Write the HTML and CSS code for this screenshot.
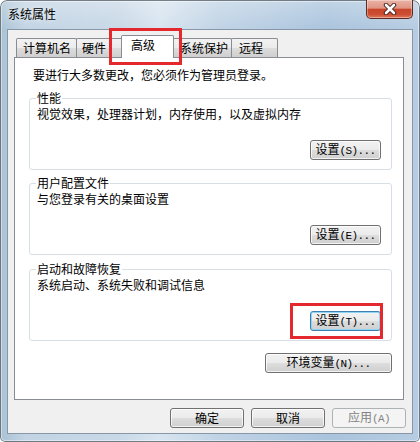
FILE: index.html
```html
<!DOCTYPE html>
<html lang="zh-CN">
<head>
<meta charset="utf-8">
<title>系统属性</title>
<link rel="stylesheet" href="styles.css">
</head>
<body>
<div class="window">
  <div class="titlebar">
    <span class="title">系统属性</span>
    <div class="close">
      <svg width="14" height="12" viewBox="0 0 14 12">
        <path d="M3 2 L11 10 M11 2 L3 10" stroke="#3a1a14" stroke-width="4.4" stroke-linecap="round" fill="none"/>
        <path d="M3 2 L11 10 M11 2 L3 10" stroke="#ffffff" stroke-width="2.6" stroke-linecap="round" fill="none"/>
      </svg>
    </div>
  </div>
  <div class="client">
    <div class="tabs">
      <div class="tab t1">计算机名</div>
      <div class="tab t2">硬件</div>
      <div class="tab t3 sel">高级</div>
      <div class="tab t4">系统保护</div>
      <div class="tab t5">远程</div>
    </div>
    <div class="panel">
      <p class="intro">要进行大多数更改，您必须作为管理员登录。</p>
      <div class="group g1">
        <div class="legend">性能</div>
        <p class="desc">视觉效果，处理器计划，内存使用，以及虚拟内存</p>
        <div class="row"><button class="btn small">设置<span class="lat">(S)...</span></button></div>
      </div>
      <div class="group g2">
        <div class="legend">用户配置文件</div>
        <p class="desc">与您登录有关的桌面设置</p>
        <div class="row"><button class="btn small">设置<span class="lat">(E)...</span></button></div>
      </div>
      <div class="group g3">
        <div class="legend">启动和故障恢复</div>
        <p class="desc">系统启动、系统失败和调试信息</p>
        <div class="row"><button class="btn small focus">设置<span class="lat">(T)...</span></button></div>
      </div>
      <div class="row env-row"><button class="btn env">环境变量<span class="lat">(N)...</span></button></div>
    </div>
    <div class="footer">
      <button class="btn big">确定</button>
      <button class="btn big">取消</button>
      <button class="btn big disabled">应用<span class="lat">(A)</span></button>
    </div>
  </div>
  <div class="mark mark-tab"></div>
  <div class="mark mark-btn"></div>
</div>
</body>
</html>
```
FILE: styles.css
```css
* { box-sizing: border-box; }
html, body { margin: 0; padding: 0; }
body {
  width: 420px;
  height: 442px;
  overflow: hidden;
  background: #ffffff;
  font: 12px/14px "Noto Sans CJK SC", sans-serif;
  color: #000;
}
p { margin: 0; }

.window {
  position: relative;
  width: 420px;
  height: 442px;
  border-radius: 7px 7px 5px 5px;
  overflow: hidden;
  background:
    linear-gradient(180deg, rgba(255,255,255,0.28), rgba(255,255,255,0) 30px),
    linear-gradient(90deg, #a9c2d4 0, #c2d4e4 6%, #c8d8e7 28%, #d8e5f0 38%, #c0d3e5 52%, #aac4dd 78%, #b6cce2 100%);
  box-shadow: inset 0 0 0 1px rgba(40,50,60,0.6), inset 0 0 0 2px rgba(255,255,255,0.45);
}

.titlebar {
  height: 29px;
  display: flex;
  align-items: flex-start;
  padding-left: 8px;
}
.title {
  margin-top: 7px;
  text-shadow: 0 0 5px rgba(255,255,255,0.9);
}
.close {
  margin-left: auto;
  margin-right: 7px;
  width: 47px;
  height: 19px;
  border: 1px solid #5e2a22;
  border-top: none;
  border-radius: 0 0 5px 5px;
  background: linear-gradient(180deg, #eab3a7 0%, #df9584 45%, #c9452c 52%, #cc4e33 80%, #e07a5e 100%);
  box-shadow: inset 0 0 0 1px rgba(255,255,255,0.35);
  display: flex;
  align-items: center;
  justify-content: center;
}

.client {
  margin: 0 7px;
  height: 405px;
  background: #f0f0f0;
  border: 1px solid #8797a8;
  padding-top: 5px;
  display: flex;
  flex-direction: column;
}

.tabs {
  display: flex;
  align-items: flex-end;
  height: 22px;
  padding-left: 8px;
  position: relative;
  z-index: 1;
}
.tab {
  height: 19px;
  border: 1px solid #898c95;
  border-bottom: none;
  padding: 2px 0 0 6px;
  margin-left: -1px;
  white-space: nowrap;
  background: linear-gradient(180deg, #f2f2f2 0%, #ebebeb 50%, #dddddd 51%, #cfcfcf 100%);
  border-radius: 2px 2px 0 0;
}
.t1 { width: 61px; margin-left: 0; }
.t2 { width: 47px; padding-left: 5px; }
.t3 { width: 51px; }
.t4 { width: 60px; padding-left: 7px; }
.t5 { width: 47px; padding-left: 7px; }
.sel {
  position: relative;
  z-index: 2;
  width: 53px;
  height: 23px;
  margin-left: -2px;
  margin-right: -1px;
  margin-bottom: -1px;
  padding-left: 9px;
  background: #ffffff;
}

.panel {
  margin-left: 6px;
  width: 390px;
  height: 343px;
  background: #ffffff;
  border: 1px solid #898c95;
  padding: 10px 11px 0 14px;
}
.intro { margin: 0 0 16px 4px; }

.group {
  border: 1px solid #d5dfe5;
  border-radius: 3px;
  padding: 0 10px 9px 7px;
}
.g2 { margin-top: 13px; }
.g3 { margin-top: 14px; }
.legend {
  margin: -8px 0 0 -1px;
  padding: 0 1px;
  background: #ffffff;
  width: fit-content;
}
.desc { margin-top: 2px; }
.row {
  display: flex;
  justify-content: flex-end;
  margin-top: 19px;
}
.env-row { margin-top: 12px; }

.btn {
  height: 20px;
  padding: 0;
  border: 1px solid #707070;
  border-radius: 3px;
  background: linear-gradient(180deg, #f2f2f2 0%, #ebebeb 48%, #dddddd 52%, #cfcfcf 100%);
  box-shadow: inset 0 0 0 1px rgba(255,255,255,0.75);
  font: 12px/16px "Noto Sans CJK SC", sans-serif;
  color: #000;
  white-space: nowrap;
}
.small { width: 71px; }
.env { width: 127px; }
.big { width: 74px; }
.focus {
  border-color: #3c7fb1;
  box-shadow: inset 0 0 0 1px #8fd3f5;
}
.disabled {
  border-color: #adb2b5;
  background: #f4f4f4;
  box-shadow: none;
  color: #838383;
}
.lat {
  font-family: "Liberation Mono", monospace;
  font-size: 11px;
  letter-spacing: -0.6px;
}

.footer {
  display: flex;
  justify-content: flex-end;
  gap: 7px;
  padding-right: 6px;
  margin-top: 8px;
}

.mark {
  position: absolute;
  border: 3px solid #e3282e;
  z-index: 5;
}
.mark-tab { left: 109px; top: 28px; width: 73px; height: 37px; }
.mark-btn { left: 290px; top: 303px; width: 93px; height: 36px; }
```
